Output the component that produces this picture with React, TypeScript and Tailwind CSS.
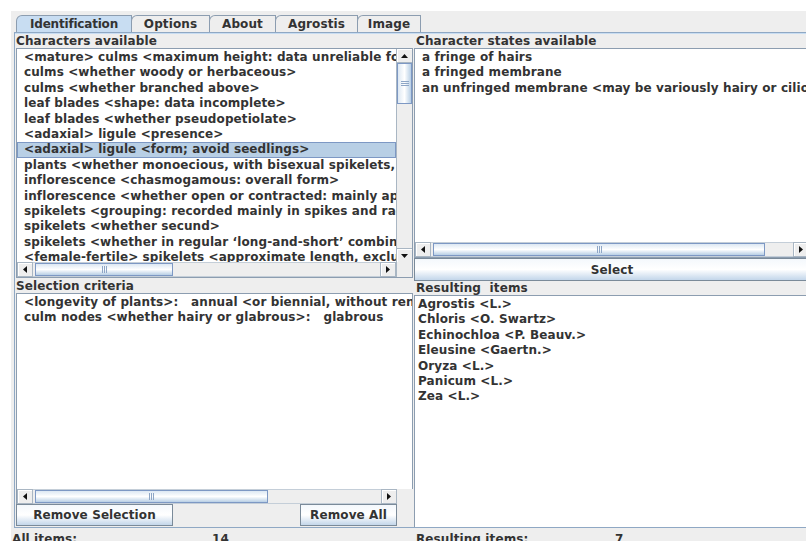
import React from "react";

type Dir = "up" | "down" | "left" | "right";

const characters = [
  "<mature> culms <maximum height: data unreliable for some species>",
  "culms <whether woody or herbaceous>",
  "culms <whether branched above>",
  "leaf blades <shape: data incomplete>",
  "leaf blades <whether pseudopetiolate>",
  "<adaxial> ligule <presence>",
  "<adaxial> ligule <form; avoid seedlings>",
  "plants <whether monoecious, with bisexual spikelets, or dioecious>",
  "inflorescence <chasmogamous: overall form>",
  "inflorescence <whether open or contracted: mainly applicable to panicles>",
  "spikelets <grouping: recorded mainly in spikes and racemes>",
  "spikelets <whether secund>",
  "spikelets <whether in regular \u2018long-and-short\u2019 combinations>",
  "<female-fertile> spikelets <approximate length, excluding awns>",
  "<female-fertile> spikelets <shape of the lemma>",
];

const states = [
  "a fringe of hairs",
  "a fringed membrane",
  "an unfringed membrane <may be variously hairy or ciliolate>",
];

const criteria = [
  "<longevity of plants>:   annual <or biennial, without renewal buds>",
  "culm nodes <whether hairy or glabrous>:   glabrous",
];

const results = [
  "Agrostis <L.>",
  "Chloris <O. Swartz>",
  "Echinochloa <P. Beauv.>",
  "Eleusine <Gaertn.>",
  "Oryza <L.>",
  "Panicum <L.>",
  "Zea <L.>",
];

function Triangle({ dir }: { dir: Dir }) {
  if (dir === "up")
    return (
      <svg width="7" height="4" viewBox="0 0 7 4">
        <polygon points="0,4 7,4 3.5,0" fill="#111" />
      </svg>
    );
  if (dir === "down")
    return (
      <svg width="7" height="4" viewBox="0 0 7 4">
        <polygon points="0,0 7,0 3.5,4" fill="#111" />
      </svg>
    );
  if (dir === "left")
    return (
      <svg width="4" height="7" viewBox="0 0 4 7">
        <polygon points="4,0 4,7 0,3.5" fill="#111" />
      </svg>
    );
  return (
    <svg width="4" height="7" viewBox="0 0 4 7">
      <polygon points="0,0 0,7 4,3.5" fill="#111" />
    </svg>
  );
}

function ArrowButton({ dir }: { dir: Dir }) {
  return (
    <div className="w-[16px] h-[15px] shrink-0 flex items-center justify-center bg-[#eeeeee] border border-[#a9b6c3] shadow-[inset_1px_1px_0_#ffffff]">
      <Triangle dir={dir} />
    </div>
  );
}

function HThumb({ className }: { className: string }) {
  return (
    <div
      className={`h-full border border-[#7d98c4] bg-linear-to-b from-[#dde8f3] via-white to-[#b8cfe5] flex items-center justify-center gap-[1px] ${className}`}
    >
      <div className="w-px h-[7px] bg-[#8ea6c6]" />
      <div className="w-px h-[7px] bg-[#8ea6c6]" />
      <div className="w-px h-[7px] bg-[#8ea6c6]" />
    </div>
  );
}

function HScroll({ thumb }: { thumb: string }) {
  return (
    <div className="h-[15px] flex bg-[#eeeeee]">
      <ArrowButton dir="left" />
      <div className="flex-1 flex pl-[2px] border-y border-[#c4ced8]">
        <HThumb className={thumb} />
      </div>
      <ArrowButton dir="right" />
    </div>
  );
}

function VScroll() {
  return (
    <div className="w-[16px] shrink-0 flex flex-col bg-[#eeeeee] border-l border-[#a9b6c3]">
      <div className="h-[14px] flex items-center justify-center border-b border-[#a9b6c3] shadow-[inset_1px_1px_0_#ffffff]">
        <Triangle dir="up" />
      </div>
      <div className="h-[41px] border border-[#7d98c4] bg-linear-to-r from-[#dde8f3] via-white to-[#b8cfe5] flex flex-col items-center justify-center gap-[1px]">
        <div className="h-px w-[8px] bg-[#8ea6c6]" />
        <div className="h-px w-[8px] bg-[#8ea6c6]" />
        <div className="h-px w-[8px] bg-[#8ea6c6]" />
      </div>
      <div className="flex-1" />
      <div className="h-[14px] flex items-center justify-center border-t border-[#a9b6c3] shadow-[inset_1px_1px_0_#ffffff]">
        <Triangle dir="down" />
      </div>
    </div>
  );
}

function Tab({ label, className, active }: { label: string; className: string; active?: boolean }) {
  return (
    <div
      className={`h-[17px] -mr-px flex items-center justify-center whitespace-nowrap border border-b-0 border-[#8c9db0] rounded-tl-[6px] ${
        active ? "bg-[#c8ddf2]" : "bg-[#eeeeee]"
      } ${className}`}
    >
      {label}
    </div>
  );
}

function Button({ label, className }: { label: string; className: string }) {
  return (
    <div
      className={`flex items-center justify-center border border-[#7a8a99] bg-linear-to-b from-[#f4f8fc] via-white to-[#c3d6ea] ${className}`}
    >
      {label}
    </div>
  );
}

function Label({ text, className }: { text: string; className: string }) {
  return <div className={`whitespace-pre flex items-center shrink-0 ${className}`}>{text}</div>;
}

export default function App() {
  return (
    <div className="w-[806px] h-[541px] overflow-hidden bg-white pl-[11px] pt-[11px] font-['DejaVu_Sans',sans-serif] font-bold text-[12px] tracking-[0.1px] text-[#333333]">
      <div className="w-[820px] h-[530px] bg-[#eeeeee] flex flex-col">
        {/* tab strip */}
        <div className="h-[21px] pt-[4px] pl-[5px] flex items-end shrink-0">
          <Tab label="Identification" className="w-[116px] tracking-[-0.2px]" active />
          <Tab label="Options" className="w-[79px]" />
          <Tab label="About" className="w-[67px]" />
          <Tab label="Agrostis" className="w-[83px]" />
          <Tab label="Image" className="w-[64px]" />
        </div>

        {/* tab body */}
        <div className="h-[496px] ml-[3px] border-t border-l border-b border-[#8fa8c4] shadow-[inset_0_1px_0_#c8ddf2] flex shrink-0">
          {/* left column */}
          <div className="w-[398px] shrink-0 flex flex-col">
            <Label text="Characters available" className="h-[15px] pl-[1px]" />
            <div className="h-[230px] ml-[1px] border border-[#8c9db0] flex flex-col bg-white">
              <div className="flex-1 flex min-h-0">
                <div className="flex-1 overflow-hidden pt-[1px]">
                  {characters.map((c, i) =>
                    i === 6 ? (
                      <div
                        key={i}
                        className="h-[15.4px] leading-[13.4px] whitespace-nowrap pl-[6px] bg-[#b8cfe5] border border-[#7d98c4]"
                      >
                        {c}
                      </div>
                    ) : (
                      <div key={i} className="h-[15.4px] leading-[15.4px] whitespace-nowrap pl-[7px]">
                        {c}
                      </div>
                    )
                  )}
                </div>
                <VScroll />
              </div>
              <div className="flex">
                <div className="flex-1">
                  <HScroll thumb="w-[138px]" />
                </div>
                <div className="w-[16px] h-[15px] bg-[#eeeeee] border-l border-[#a9b6c3]" />
              </div>
            </div>

            <Label text="Selection criteria" className="h-[15px] pl-[1px]" />
            <div className="h-[211px] ml-[1px] flex flex-col">
              <div className="flex-1 border border-b-0 border-[#8c9db0] bg-white overflow-hidden pt-[1px]">
                {criteria.map((c, i) => (
                  <div key={i} className="h-[15.4px] leading-[15.4px] whitespace-pre pl-[7px]">
                    {c}
                  </div>
                ))}
              </div>
              <div className="flex">
                <div className="w-[381px] border-l border-[#8c9db0]">
                  <HScroll thumb="w-[233px]" />
                </div>
                <div className="flex-1" />
              </div>
            </div>

            <div className="flex-1 flex ml-[1px] pb-[1px]">
              <Button label="Remove Selection" className="w-[157px]" />
              <div className="flex-1" />
              <Button label="Remove All" className="w-[97px] mr-[16px]" />
            </div>
          </div>

          {/* right column */}
          <div className="w-[397px] shrink-0 flex flex-col">
            <Label text="Character states available" className="h-[15px] pl-[3px]" />
            <div className="h-[210px] ml-[1px] border border-[#8c9db0] flex flex-col bg-white">
              <div className="flex-1 overflow-hidden pt-[1px]">
                {states.map((s, i) => (
                  <div key={i} className="h-[15.4px] leading-[15.4px] whitespace-nowrap pl-[7px]">
                    {s}
                  </div>
                ))}
              </div>
              <HScroll thumb="w-[332px]" />
            </div>
            <Button label="Select" className="h-[23px] ml-[1px] shrink-0" />
            <Label text="Resulting  items" className="h-[14px] pl-[3px]" />
            <div className="flex-1 ml-[1px] border-l border-t border-[#8c9db0] bg-white overflow-hidden pt-[1px]">
              {results.map((r, i) => (
                <div key={i} className="h-[15.4px] leading-[15.4px] whitespace-nowrap pl-[3px]">
                  {r}
                </div>
              ))}
            </div>
          </div>
        </div>

        {/* status line */}
        <div className="flex h-[14px] pt-[4px] leading-[14px] shrink-0">
          <div className="w-[201px] pl-[1px]">All items:</div>
          <div className="w-[204px]">14</div>
          <div className="w-[199px]">Resulting items:</div>
          <div>7</div>
        </div>
      </div>
    </div>
  );
}
